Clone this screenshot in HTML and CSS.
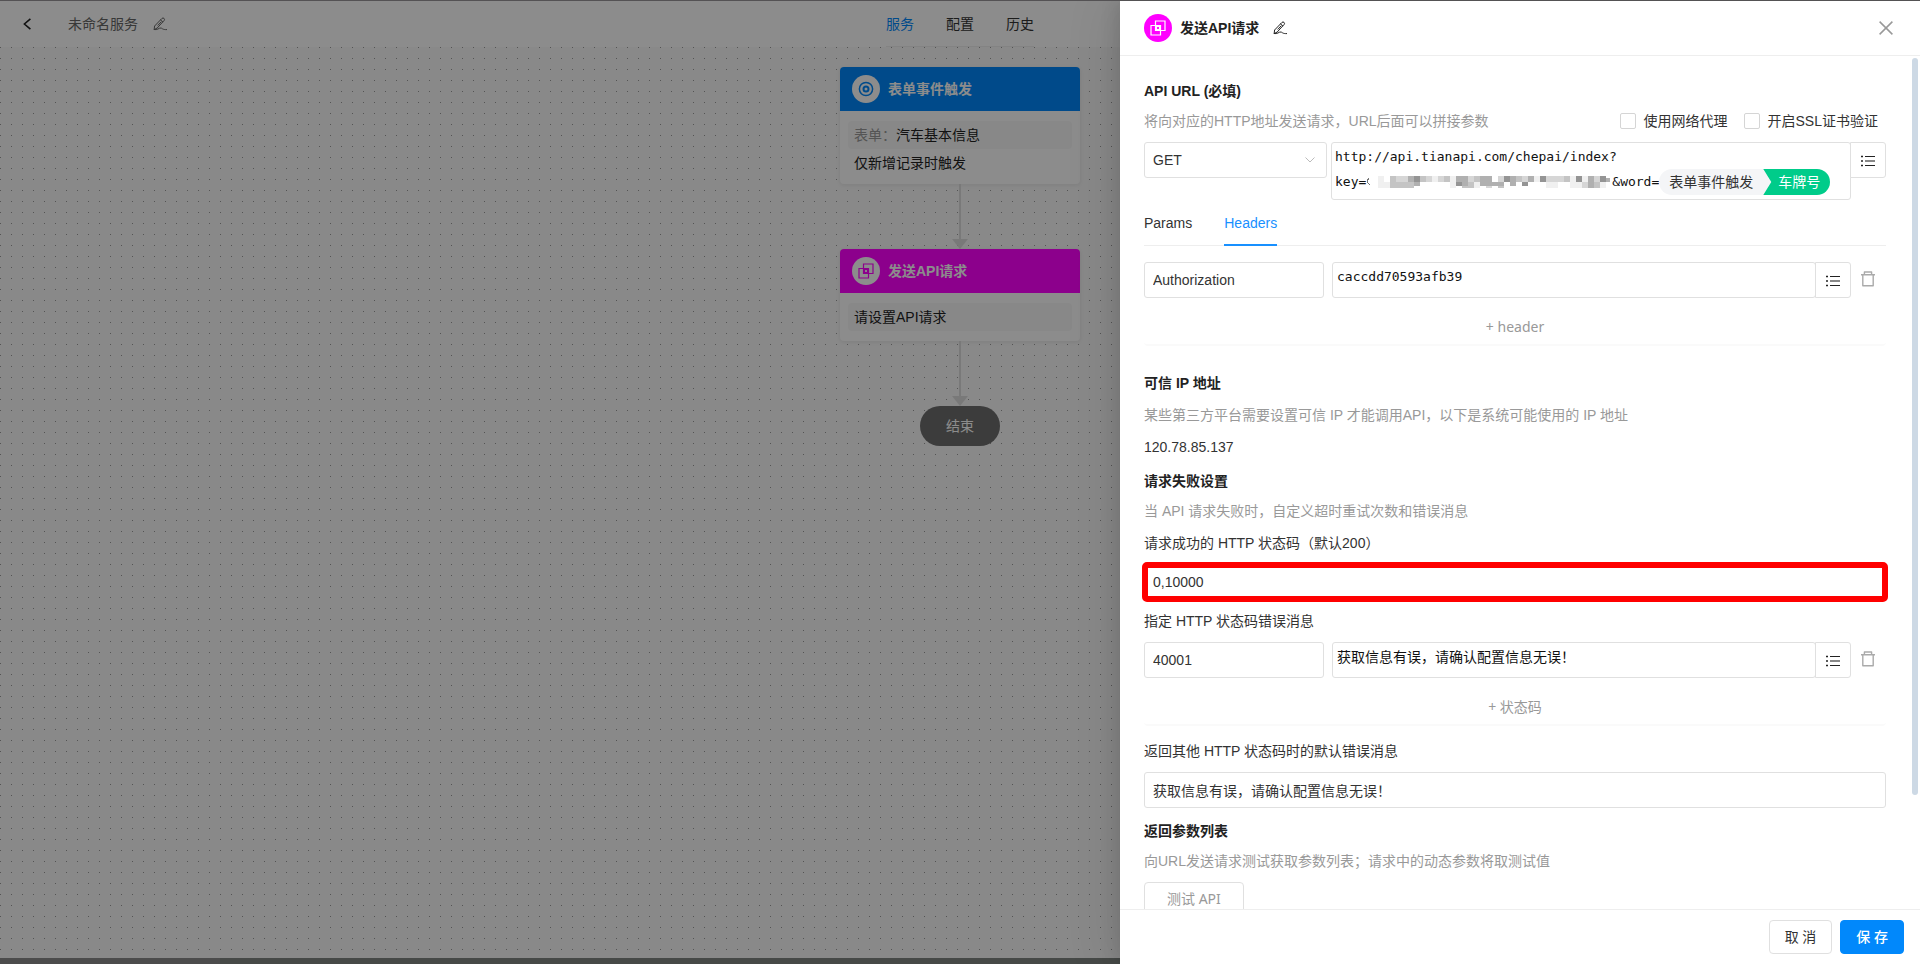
FILE: index.html
```html
<!DOCTYPE html>
<html lang="zh-CN">
<head>
    <meta charset="UTF-8">
    <meta name="viewport" content="width=device-width, initial-scale=1.0">
    <title>未命名服务</title>
    <link rel="stylesheet" href="styles.css">
</head>
<body>
    <svg width="0" height="0" class="sprite" aria-hidden="true">
        <symbol id="icon-edit" viewBox="0 0 14 14">
            <path d="M1.2 12.2 L1.6 9 L9 1.4 Q10 .5 11 1.4 Q12 2.4 11.2 3.4 L4.4 10.8 Z M7.6 2.9 L9.8 5 M5 8.2 L8 5 M1.2 12.6 C4.5 13.4 6 10.6 8 11 C9.6 11.4 9.4 12.8 13.6 12.6" fill="none" stroke="currentColor" stroke-width="1" stroke-linejoin="round" stroke-linecap="round"/>
        </symbol>
        <symbol id="icon-api" viewBox="0 0 16 16">
            <path d="M5.5 1 H15 V10.5 H5.5 Z M1 5.5 H10.5 V15 H1 Z M6.5 6.5 H9.5 V9.5 H6.5 Z" fill="none" stroke="currentColor" stroke-width="1.2"/>
        </symbol>
        <symbol id="icon-list" viewBox="0 0 14 12">
            <path d="M4 1.5 H14 M4 10.5 H14 M0 1.5 H2 M0 6 H2 M0 10.5 H2" stroke="#222" stroke-width="1"/>
            <path d="M4 6 H14" stroke="#888" stroke-width="2"/>
            <path d="M.5 .5 H1.5 V2.5 H.5 Z M.5 5 H1.5 V7 H.5 Z M.5 9.5 H1.5 V11.5 H.5 Z" fill="#222"/>
        </symbol>
        <symbol id="icon-trash" viewBox="0 0 14 16">
            <path d="M0 3.8 H14 M3.4 3.8 V1 H10.6 V3.8 M1.8 3.8 V14.8 H12.2 V3.8" fill="none" stroke="currentColor" stroke-width="1.4" stroke-linejoin="round"/>
        </symbol>
    </svg>

    <div class="app">
        <header class="topbar">
            <div class="topbar-left">
                <button class="icon-btn" aria-label="返回">
                    <svg width="8" height="12" viewBox="0 0 8 12"><path d="M7.4 .8 L1.4 6 L7.4 11.2" fill="none" stroke="#222" stroke-width="1.6"/></svg>
                </button>
                <span class="service-name">未命名服务</span>
                <button class="icon-btn" aria-label="重命名"><svg width="14" height="14"><use href="#icon-edit"/></svg></button>
            </div>
            <nav class="topbar-nav">
                <a href="#" class="active">服务</a>
                <a href="#">配置</a>
                <a href="#">历史</a>
            </nav>
            <div></div>
        </header>

        <main class="canvas">
            <section class="node">
                <h3 class="node-head blue">
                    <span class="node-icon">
                        <svg width="16" height="16" viewBox="0 0 16 16"><circle cx="8" cy="8" r="6.6" fill="none" stroke="currentColor" stroke-width="1.5"/><circle cx="8" cy="8" r="2.5" fill="none" stroke="currentColor" stroke-width="2"/></svg>
                    </span>
                    表单事件触发
                </h3>
                <div class="node-body">
                    <p class="node-row filled"><span class="muted">表单：</span>汽车基本信息</p>
                    <p class="node-row">仅新增记录时触发</p>
                </div>
            </section>
            <div class="connector"></div>
            <section class="node">
                <h3 class="node-head magenta">
                    <span class="node-icon"><svg width="16" height="16"><use href="#icon-api"/></svg></span>
                    发送API请求
                </h3>
                <div class="node-body">
                    <p class="node-row filled">请设置API请求</p>
                </div>
            </section>
            <div class="connector"></div>
            <div class="node-end">结束</div>
        </main>
        <div class="hscroll"><div class="hscroll-thumb"></div></div>

        <div class="mask"></div>

        <aside class="drawer">
            <header class="drawer-head">
                <span class="drawer-icon"><svg width="16" height="16"><use href="#icon-api"/></svg></span>
                <h2>发送API请求</h2>
                <button class="icon-btn" aria-label="重命名"><svg width="14" height="14"><use href="#icon-edit"/></svg></button>
                <button class="icon-btn close" aria-label="关闭">
                    <svg width="14" height="14" viewBox="0 0 14 14"><path d="M.6 .6 L13.4 13.4 M13.4 .6 L.6 13.4" stroke="#999" stroke-width="1.5"/></svg>
                </button>
            </header>

            <div class="drawer-wrap">
                <form class="drawer-body">
                    <h4>API URL (必填)</h4>
                    <div class="desc-row">
                        <p class="desc">将向对应的HTTP地址发送请求，URL后面可以拼接参数</p>
                        <label class="check"><input type="checkbox">使用网络代理</label>
                        <label class="check"><input type="checkbox">开启SSL证书验证</label>
                    </div>

                    <div class="url-row">
                        <div class="select">
                            <select aria-label="请求方式">
                                <option>GET</option>
                                <option>POST</option>
                            </select>
                            <svg width="10" height="6" viewBox="0 0 10 6"><path d="M.5 .5 L5 5 L9.5 .5" fill="none" stroke="#bbb"/></svg>
                        </div>
                        <div class="editor url-editor" contenteditable="true" role="textbox" aria-label="API URL" spellcheck="false">
                            <div class="editor-line">http://api.tianapi.com/chepai/index?</div>
                            <div class="editor-line">key=<svg class="mosaic" width="246" height="12" viewBox="0 0 246 12" shape-rendering="crispEdges">
                                    <path d="M3 2 Q1 4 2 7 L4 9" fill="none" stroke="#777"/>
                                    <path fill="#f0f0f0" d="M12 0h6v12h-6z M18 6h6v6h-6z M66 0h6v6h-6z M84 0h6v12h-6z M108 6h6v6h-6z M168 0h6v6h-6z M180 6h12v6h-12z M204 0h6v12h-6z M210 6h6v6h-6z M216 0h6v6h-6z M234 6h6v6h-6z"/>
                                    <path fill="#d6d6d6" d="M30 0h12v6h-12z M60 0h6v6h-6z M72 0h6v6h-6z M102 0h6v6h-6z M120 6h6v6h-6z M132 0h6v6h-6z M156 0h6v6h-6z M180 0h12v6h-12z M192 0h6v6h-6z M216 6h6v6h-6z M228 0h6v6h-6z"/>
                                    <path fill="#c4c4c4" d="M24 0h6v12h-6z M30 6h18v6h-18z M54 0h6v6h-6z M78 0h6v6h-6z M96 6h12v6h-12z M108 0h6v6h-6z M132 6h6v6h-6z M150 0h6v6h-6z M198 0h6v6h-6z M228 6h6v6h-6z"/>
                                    <path fill="#b0b0b0" d="M42 0h6v6h-6z M48 6h6v4h-6z M90 0h12v6h-12z M96 6h6v4h-6z M114 0h12v10h-12z M126 6h12v4h-12z M144 0h6v10h-6z M162 0h6v6h-6z M222 0h6v12h-6z M240 2h4v4h-4z"/>
                                    <path fill="#949494" d="M48 0h6v6h-6z M90 6h6v4h-6z M138 0h6v6h-6z M156 6h6v4h-6z M174 0h6v6h-6z M210 0h6v6h-6z M234 0h6v6h-6z"/>
                                </svg>&amp;word=<span class="tag" contenteditable="false"><span class="tag-node">表单事件触发</span><span class="tag-field">车牌号</span></span></div>
                        </div>
                        <button type="button" class="list-btn" aria-label="插入字段"><svg width="14" height="12"><use href="#icon-list"/></svg></button>
                    </div>

                    <nav class="tabs">
                        <a href="#">Params</a>
                        <a href="#" class="active">Headers</a>
                    </nav>

                    <div class="pairs">
                        <div class="pair-row">
                            <input class="input key" type="text" value="Authorization" aria-label="header" spellcheck="false">
                            <textarea class="editor" rows="1" aria-label="header 值" spellcheck="false">caccdd70593afb39</textarea>
                            <button type="button" class="list-btn" aria-label="插入字段"><svg width="14" height="12"><use href="#icon-list"/></svg></button>
                            <button type="button" class="icon-btn trash" aria-label="删除"><svg width="14" height="16"><use href="#icon-trash"/></svg></button>
                        </div>
                        <button type="button" class="add-btn">+ header</button>
                    </div>

                    <h4 class="section-first">可信 IP 地址</h4>
                    <p class="desc">某些第三方平台需要设置可信 IP 才能调用API，以下是系统可能使用的 IP 地址</p>
                    <p class="text">120.78.85.137</p>

                    <h4 class="section">请求失败设置</h4>
                    <p class="desc">当 API 请求失败时，自定义超时重试次数和错误消息</p>

                    <label class="text" for="okCode">请求成功的 HTTP 状态码（默认200）</label>
                    <input class="input highlight" id="okCode" type="text" value="0,10000">

                    <label class="text" for="errCode">指定 HTTP 状态码错误消息</label>
                    <div class="pairs">
                        <div class="pair-row">
                            <input class="input key" id="errCode" type="text" value="40001">
                            <textarea class="editor message" rows="1" aria-label="错误消息" spellcheck="false">获取信息有误，请确认配置信息无误！</textarea>
                            <button type="button" class="list-btn" aria-label="插入字段"><svg width="14" height="12"><use href="#icon-list"/></svg></button>
                            <button type="button" class="icon-btn trash" aria-label="删除"><svg width="14" height="16"><use href="#icon-trash"/></svg></button>
                        </div>
                        <button type="button" class="add-btn">+ 状态码</button>
                    </div>

                    <label class="text after-pairs" for="defaultMsg">返回其他 HTTP 状态码时的默认错误消息</label>
                    <input class="input" id="defaultMsg" type="text" value="获取信息有误，请确认配置信息无误！">

                    <h4 class="section">返回参数列表</h4>
                    <p class="desc">向URL发送请求测试获取参数列表；请求中的动态参数将取测试值</p>
                    <button type="button" class="btn test-btn">测试 API</button>
                </form>
                <div class="scroll-thumb"></div>
            </div>

            <footer class="drawer-foot">
                <button type="button" class="btn">取 消</button>
                <button type="button" class="btn primary">保 存</button>
            </footer>
        </aside>
    </div>
</body>
</html>
```

FILE: styles.css
```css
* {
    box-sizing: border-box;
}

body {
    margin: 0;
    font-family: "Liberation Sans", "Noto Sans CJK SC", sans-serif;
    font-size: 14px;
    line-height: 22px;
    color: #333;
}

h2, h3, h4, p {
    margin: 0;
    font-size: 14px;
}

a {
    color: inherit;
    text-decoration: none;
}

button, input, select, textarea {
    font: inherit;
    color: inherit;
}

svg {
    display: block;
    flex: none;
}

.sprite {
    position: absolute;
}

.app {
    position: relative;
    display: flex;
    flex-direction: column;
    height: 100vh;
    border-top: 1px solid #545254;
    overflow: hidden;
}

.icon-btn {
    display: flex;
    padding: 0;
    border: 0;
    background: none;
    cursor: pointer;
}

/* top bar */
.topbar {
    display: grid;
    grid-template-columns: 1fr auto 1fr;
    height: 46px;
    flex: none;
    background: #fff;
}

.topbar-left {
    display: flex;
    align-items: center;
    padding-left: 23px;
    color: #666;
}

.service-name {
    margin: 0 15px 0 37px;
}

.topbar-nav {
    display: flex;
    align-items: center;
    gap: 32px;
    border-bottom: 1px solid #eee;
}

.topbar-nav .active {
    color: #0188fb;
}

/* flow canvas */
.canvas {
    flex: 1;
    display: flex;
    flex-direction: column;
    align-items: center;
    padding-top: 20px;
    background: conic-gradient(from 0deg at 1px 1px, #f9f9f9 270deg, #999 0) 0 0 / 11px 11px;
}

.node {
    width: 240px;
    border-radius: 4px;
    background: #fff;
    box-shadow: 0 1px 4px rgba(0, 0, 0, 0.08);
}

.node-head {
    display: flex;
    align-items: center;
    gap: 8px;
    height: 44px;
    padding: 0 12px;
    border-radius: 4px 4px 0 0;
    color: #fff;
}

.blue {
    background: #0188fb;
}

.magenta {
    background: #f0f;
}

.node-icon, .drawer-icon {
    display: flex;
    align-items: center;
    justify-content: center;
    width: 28px;
    height: 28px;
    border-radius: 50%;
    background: #fff;
}

.blue .node-icon {
    color: #0188fb;
}

.magenta .node-icon {
    color: #f0f;
}

.node-body {
    padding: 10px 8px;
    color: #222;
}

.node-row {
    padding: 3px 6px 0;
}

.node-row.filled {
    padding-bottom: 3px;
    border-radius: 4px;
    background: #f8f8f8;
}

.muted {
    color: #999;
}

.connector {
    display: flex;
    flex-direction: column;
    align-items: center;
    height: 65px;
}

.connector::before {
    content: "";
    flex: 1;
    width: 2px;
    background: #ddd;
}

.connector::after {
    content: "";
    border: 8px solid transparent;
    border-top: 10px solid #ddd;
    border-bottom: 0;
}

.node-end {
    width: 80px;
    border-radius: 20px;
    background: #6e6e6e;
    color: #fff;
    line-height: 40px;
    text-align: center;
}

.hscroll {
    flex: none;
    background: #8a8a8a;
}

.hscroll-thumb {
    height: 6px;
    margin-left: 220px;
    background: #808682;
}

.mask {
    position: absolute;
    inset: 0;
    background: rgba(0, 0, 0, 0.45);
}

/* drawer */
.drawer {
    position: absolute;
    top: 0;
    right: 0;
    bottom: 0;
    display: flex;
    flex-direction: column;
    width: 800px;
    max-width: 100%;
    background: #fff;
    box-shadow: -6px 0 48px rgba(0, 0, 0, 0.1), -4px 0 16px rgba(0, 0, 0, 0.1);
}

.drawer-head {
    display: flex;
    align-items: center;
    height: 55px;
    flex: none;
    padding: 0 27px 0 24px;
    border-bottom: 1px solid #eee;
    color: #222;
}

.drawer-head h2 {
    margin: 0 14px 0 8px;
}

.drawer-icon {
    background: #f0f;
    color: #fff;
}

.close {
    margin-left: auto;
}

.drawer-wrap {
    position: relative;
    flex: 1;
    min-height: 0;
}

.drawer-body {
    height: 100%;
    padding: 24px 34px 24px 24px;
    overflow-y: auto;
    scrollbar-width: none;
}

.scroll-thumb {
    position: absolute;
    top: 2px;
    right: 2px;
    bottom: 114px;
    width: 6px;
    border-radius: 3px;
    background: #cdd9e5;
}

h4 {
    color: #222;
}

.section-first {
    margin-top: 26px;
}

.section {
    margin-top: 12px;
}

.desc {
    margin-top: 10px;
    color: #999;
}

h4.section + .desc {
    margin-top: 8px;
}

.text {
    display: block;
    margin: 10px 0;
}

.desc-row {
    display: flex;
    align-items: center;
    gap: 16px;
    margin: 8px 0 10px;
    padding-right: 8px;
}

.desc-row .desc {
    flex: 1;
    margin: 0;
}

.check {
    display: flex;
    align-items: center;
    gap: 8px;
}

.check input {
    appearance: none;
    width: 16px;
    height: 16px;
    margin: 0;
    border: 1px solid #d5d5d5;
    border-radius: 2px;
    background: #fff;
}

.input, .select select, .list-btn, .editor {
    border: 1px solid #e0e0e0;
    border-radius: 3px;
    background: #fff;
    outline: 0;
}

.input {
    display: block;
    width: 100%;
    height: 36px;
    padding: 0 8px;
}

.highlight {
    outline: 6px solid #f00;
    outline-offset: -4px;
}

.url-row, .pair-row {
    display: flex;
    align-items: flex-start;
}

.select {
    display: flex;
    align-items: center;
    width: 183px;
    margin-right: 4px;
}

.select select {
    appearance: none;
    width: 100%;
    height: 36px;
    padding: 0 30px 0 8px;
}

.select svg {
    margin-left: -22px;
    margin-right: 12px;
    pointer-events: none;
}

.editor {
    flex: 1;
    min-width: 0;
    height: 36px;
    padding: 4px;
    color: #111;
    font-family: "DejaVu Sans Mono", "Noto Sans CJK SC", monospace;
    font-size: 13px;
    line-height: 20px;
    resize: none;
    overflow: hidden;
}

.editor.message {
    font-size: 14px;
}

.url-editor {
    height: auto;
    padding: 4px 3px;
}

.editor-line {
    display: flex;
    align-items: center;
}

.editor-line + .editor-line {
    margin-top: 2px;
}

.tag {
    display: flex;
    border-radius: 13px;
    overflow: hidden;
    font-family: "Liberation Sans", "Noto Sans CJK SC", sans-serif;
    font-size: 14px;
    line-height: 26px;
}

.tag-node {
    padding: 0 18px 0 10px;
    background: #f4f5f7;
    color: #333;
}

.tag-field {
    margin-left: -8px;
    padding: 0 10px 0 15px;
    background: #00cc8a;
    color: #fff;
    clip-path: polygon(0 0, 100% 0, 100% 100%, 0 100%, 8px 50%);
}

.list-btn {
    display: flex;
    align-items: center;
    justify-content: center;
    width: 36px;
    height: 36px;
    margin-left: -1px;
    padding: 2px 0 0;
    border-radius: 0 3px 3px 0;
}

/* params / headers tabs */
.tabs {
    display: flex;
    gap: 32px;
    margin-bottom: 16px;
    box-shadow: inset 0 -1px #eee;
}

.tabs a {
    padding: 12px 0 10px;
    border-bottom: 2px solid transparent;
}

.tabs .active {
    border-color: #1890ff;
    color: #1890ff;
}

.pairs {
    padding-bottom: 6px;
    border-bottom: 2px solid #fafafa;
    border-radius: 4px;
}

.key {
    width: 180px;
    margin-right: 8px;
}

.trash {
    margin: 9px 11px 0 10px;
    color: #aaa;
}

.add-btn {
    display: block;
    margin: 18px auto 0;
    padding: 0;
    border: 0;
    background: none;
    color: #999;
    font-family: "Noto Sans", "Noto Sans CJK SC", sans-serif;
}

.after-pairs {
    margin-top: 14px;
}

.btn {
    height: 34px;
    padding: 0 15px;
    border: 1px solid #e0e0e0;
    border-radius: 4px;
    background: #fff;
    font-family: "Noto Sans", "Noto Sans CJK SC", sans-serif;
}

.btn.primary {
    border-color: #0188fb;
    background: #0188fb;
    color: #fff;
    font-weight: 500;
}

.test-btn {
    margin-top: 10px;
    padding: 0 22px;
    color: #999;
}

.drawer-foot {
    display: flex;
    justify-content: flex-end;
    gap: 8px;
    flex: none;
    padding: 10px 16px;
    border-top: 1px solid #eee;
}
```
